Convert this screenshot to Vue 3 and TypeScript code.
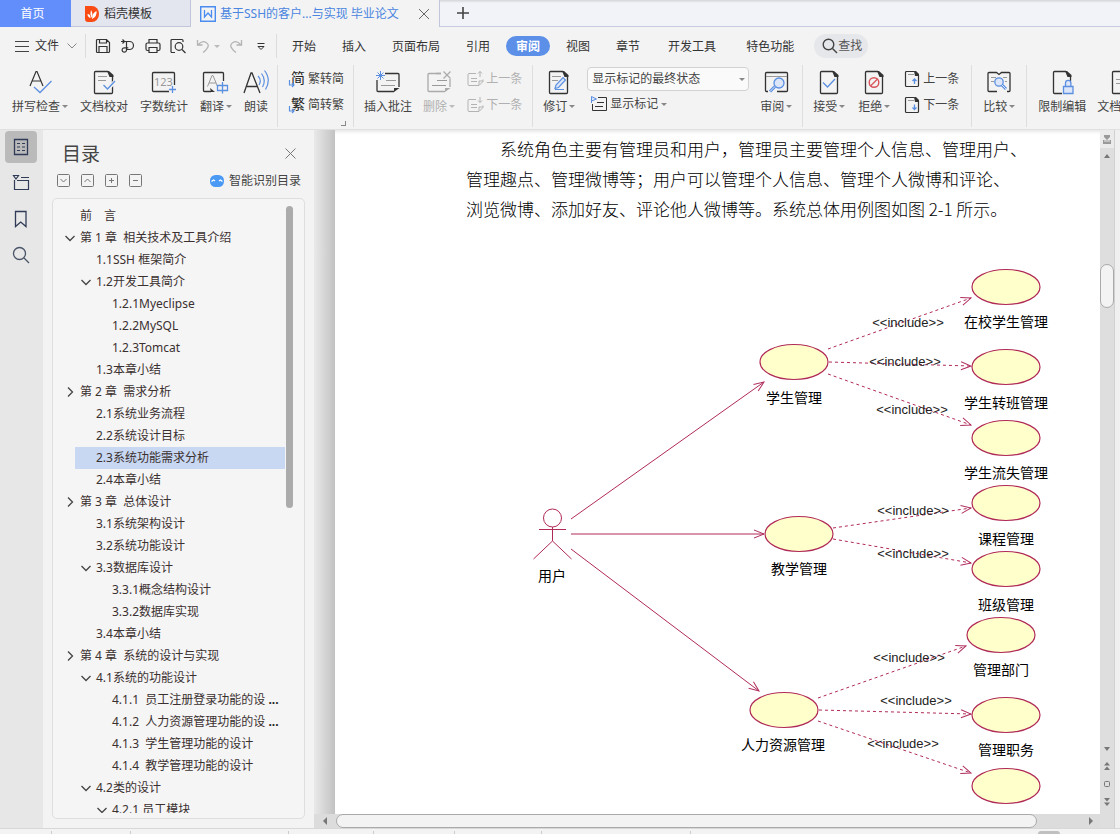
<script setup lang="ts">
import { ref } from 'vue'

interface TreeItem { text: string; level: number; arrow?: 'down' | 'right'; more?: boolean }
interface Oval { x: number; y: number; label: string; ly: number; lx: number }
interface Include { x1: number; y1: number; x2: number; y2: number; tx: number; ty: number }

const D = '#333'
const B = '#5b8fe0'
const G = '#999'
const page = (x: number, w: number) =>
  `<path d="M${x + w - 5} 3.500H${x + 1.5}a1 1 0 0 0-1 1v20a1 1 0 0 0 1 1h${w - 3}a1 1 0 0 0 1-1V8" stroke="${D}" stroke-width="1.300"/><path d="M${x + w - 6} 3h2l4.500 4v2h-4z" fill="${D}"/>`
const smallPage = `<path d="M11 1.500H3.500a1 1 0 0 0-1 1v13a1 1 0 0 0 1 1h11a1 1 0 0 0 1-1V5" stroke="${D}" stroke-width="1.200"/><path d="M11 1h2l3 3v2h-4z" fill="${D}"/><path d="M5 4.500h6" stroke="${G}"/>`
const note = (c: string) =>
  `<path d="M11 5.500H24a1 1 0 0 1 1 1V19M20 23.500H4a1 1 0 0 1-1-1V12" stroke="${c}" stroke-width="1.300"/><path d="M20 24v-4h5.500z" fill="${c}"/><path d="M12 12.500h10M7 17.500h14" stroke="${G}"/>`
const smallNote = '<path d="M10 3.500H3a1 1 0 0 0-1 1v10a1 1 0 0 0 1 1h10l4-4V9.500M13 15v-4h4M5 8.500h6M5 11.500h6" stroke="#b3b3b3"/>'

const icons: Record<string, string> = {
  spell: `<path d="M4 18 10 3.500h1L17 18M6.500 13h8" stroke="${D}" stroke-width="1.200"/><path d="M8 19l6 5.500L25.500 13" stroke="${B}" stroke-width="1.300"/>`,
  proof: page(4, 19) + `<path d="M13.500 17.500l4 4 7.500-8" stroke="#f3f3f3" stroke-width="4"/><path d="M8 8.500h9M8 12.500h8" stroke="${G}"/><path d="M13.500 17l4 4 7.500-8" stroke="${B}" stroke-width="1.300"/>`,
  count: `<path d="M19 23.500H3.500a1 1 0 0 1-1-1v-17a1 1 0 0 1 1-1h20a1 1 0 0 1 1 1V17" stroke="${D}" stroke-width="1.300"/><text x="4" y="18" font-size="11" fill="${G}" font-family="Noto Sans">123</text><path d="M19 21.500h7M22.500 18v7" stroke="${B}" stroke-width="1.300"/>`,
  translate: `<path d="M9 23.500H2.500a1 1 0 0 1-1-1v-17a1 1 0 0 1 1-1h18a1 1 0 0 1 1 1V13" stroke="${D}" stroke-width="1.300"/><path d="M8 20l5 4H9z" fill="${D}"/><path d="M5.500 18.500 10 7.500h1l4.500 11M7 15h7" stroke="${G}"/><path d="M15.500 17.500h10v5h-10zM20.500 14v11.500" stroke="${B}" stroke-width="1.300"/>`,
  read: `<path d="M2 25 9 5h1l8 20M5 18.500h10.500" stroke="${D}" stroke-width="1.300"/><path d="M16 8q4 4 1 9M19.500 5.500q5 6.500 1 13.500M22.500 2.500q7 9 1 19" stroke="${B}" stroke-width="1.200"/>`,
  comment: note(D) + `<path d="M2 7.500h9M6.500 3v9M3.500 4.500l6 6M9.500 4.500l-6 6" stroke="${B}"/>`,
  remove: note('#aaa') + '<path d="M16 2h12v9H16z" fill="#f3f3f3"/><path d="M3 12V6.500a1 1 0 0 1 1-1h12" stroke="#aaa" stroke-width="1.300"/><path d="M18.500 3.500l7 7M25.500 3.500l-7 7" stroke="#aaa" stroke-width="1.200"/>',
  revise: page(4, 19) + `<path d="M7 8.500h9M7 12.500h6" stroke="${G}"/><path d="M10 20.500l1-3.500 7-7.500 2.500 2.500-7 7.500z" fill="#dce6f8" stroke="${B}" stroke-width="1.200"/><path d="M10 21.500h9" stroke="${B}"/>`,
  review: `<path d="M6 23.500H4.500a1 1 0 0 1-1-1v-17a1 1 0 0 1 1-1h20a1 1 0 0 1 1 1v17a1 1 0 0 1-1 1H15" stroke="${D}" stroke-width="1.300"/><path d="M4 8.500h21" stroke="${G}"/><circle cx="17" cy="15" r="5" fill="#dce6f8" stroke="${B}" stroke-width="1.300"/><path d="M13 18.500l-5 5" stroke="${B}" stroke-width="3"/><path d="M13 18.500l-5 5" stroke="#dce6f8"/>`,
  accept: page(5, 18) + `<path d="M8 14.500l4.500 4.500 7.500-8" stroke="${B}" stroke-width="1.300"/>`,
  reject: page(5, 18) + '<circle cx="14" cy="14.500" r="4.800" stroke="#d9545a" stroke-width="1.400"/><path d="M10.500 18l7-7" stroke="#d9545a" stroke-width="1.300"/>',
  compare: `<path d="M12 23.500H4a1 1 0 0 1-1-1v-17a1 1 0 0 1 1-1h7.500l2.500 2 2.500-2H24a1 1 0 0 1 1 1v17a1 1 0 0 1-1 1h-2" stroke="${D}" stroke-width="1.300"/><path d="M6 9.500h5M6 13.500h3M18 9.500h4M20 13.500h2" stroke="${G}"/><circle cx="14" cy="14" r="4.200" fill="#dce6f8" stroke="${B}" stroke-width="1.300"/><path d="M17 17l4 4" stroke="${B}" stroke-width="3"/><path d="M17 17l4 4" stroke="#dce6f8"/>`,
  restrict: page(5, 18) + `<path d="M14 13h13v14H14z" fill="#f3f3f3"/><path d="M15.500 18.500h9.500v7h-9.500zM17.500 18v-3a2.700 2.700 0 0 1 5.400 0v3" fill="#dce6f8" stroke="${B}" stroke-width="1.300"/>`,
  access: page(5, 18) + `<path d="M9 11.500h8M9 15.500h8" stroke="${G}"/>`,
  toSimple: `<text x="3" y="13" font-size="14" fill="#222" font-family="Noto Sans CJK SC">简</text><path d="M1.500 10v5h4M4 13l2 2-2 2" stroke="${B}" stroke-width="1.200"/>`,
  toTrad: `<text x="3" y="13" font-size="14" fill="#222" font-family="Noto Sans CJK SC">繁</text><path d="M1.500 10v5h4M4 13l2 2-2 2" stroke="${B}" stroke-width="1.200"/>`,
  notePrev: smallNote + '<path d="M14 7V1.500M12 3.500l2-2 2 2" stroke="#b3b3b3"/>',
  noteNext: smallNote + '<path d="M14 1v5.500M12 4.500l2 2 2-2" stroke="#b3b3b3"/>',
  pagePrev: smallPage + `<path d="M11.500 14V9M9.500 11l2-2 2 2" stroke="${B}" stroke-width="1.300"/>`,
  pageNext: smallPage + `<path d="M11.500 8.500v5M9.500 11.500l2 2 2-2" stroke="${B}" stroke-width="1.300"/>`,
  marks: `<path d="M8 2.500h8.500v13h-14V9M7 7.500h7M5 11.500h8" stroke="${D}"/><path d="M1.500 8V1.500l5 2.500-5 2" stroke="${B}" fill="#dce6f8"/>`,
  save: `<path d="M2.500 3.500a1 1 0 0 1 1-1h9l3 3v9a1 1 0 0 1-1 1h-11a1 1 0 0 1-1-1zM5 15V9.500h8V15M5.500 3v3h7V3" stroke="${D}" stroke-width="1.200"/>`,
  pdf: `<path d="M2 4.500h8.500a4 4 0 0 1 0 8H7.500M3.500 2.500l2 2-2 2M7.500 5v8a2.200 2.200 0 1 1-2.200-2.200h4" stroke="${D}" stroke-width="1.200"/>`,
  print: `<path d="M5 6V2.500h8V6M5 13.500H3.500a1.500 1.500 0 0 1-1.500-1.500V7.500A1.500 1.500 0 0 1 3.500 6h11A1.500 1.500 0 0 1 16 7.500V12a1.500 1.500 0 0 1-1.500 1.500H13M5 10.500h8v5H5z" stroke="${D}" stroke-width="1.200"/>`,
  preview: `<path d="M6 15.500H3a1 1 0 0 1-1-1v-11a1 1 0 0 1 1-1h10a1 1 0 0 1 1 1V5" stroke="${D}" stroke-width="1.200"/><circle cx="10" cy="9.500" r="3.800" stroke="${D}" stroke-width="1.200"/><path d="M13 12.500l3.500 3.500" stroke="${D}" stroke-width="1.300"/>`,
  undo: '<path d="M3.500 3v5h5M4 8q4-5 8-2.500t1 6q-1 2-4 4" stroke="#b3b3b3" stroke-width="1.300"/>',
  redo: '<path d="M14.500 3v5h-5M14 8q-4-5-8-2.500t-1 6q1 2 4 4" stroke="#b3b3b3" stroke-width="1.300"/>',
  drop: `<path d="M5.500 6.500h7M6 9.500h6L9 12.500z" stroke="${D}"/>`,
}

const quick1 = ['save', 'pdf', 'print', 'preview']
const quickNames: Record<string, string> = { save: '保存', pdf: '输出为PDF', print: '打印', preview: '打印预览' }
const menusA = ['开始', '插入', '页面布局', '引用', '审阅', '视图', '章节']
const menusB = ['开发工具', '特色功能']
const menu = ref('审阅')
const markMode = ref('显示标记的最终状态')
const selected = ref(11)

const tree: TreeItem[] = [
  { text: '前　言', level: 0 },
  { text: '第 1 章  相关技术及工具介绍', level: 0, arrow: 'down' },
  { text: '1.1SSH 框架简介', level: 1 },
  { text: '1.2开发工具简介', level: 1, arrow: 'down' },
  { text: '1.2.1Myeclipse', level: 2 },
  { text: '1.2.2MySQL', level: 2 },
  { text: '1.2.3Tomcat', level: 2 },
  { text: '1.3本章小结', level: 1 },
  { text: '第 2 章  需求分析', level: 0, arrow: 'right' },
  { text: '2.1系统业务流程', level: 1 },
  { text: '2.2系统设计目标', level: 1 },
  { text: '2.3系统功能需求分析', level: 1 },
  { text: '2.4本章小结', level: 1 },
  { text: '第 3 章  总体设计', level: 0, arrow: 'right' },
  { text: '3.1系统架构设计', level: 1 },
  { text: '3.2系统功能设计', level: 1 },
  { text: '3.3数据库设计', level: 1, arrow: 'down' },
  { text: '3.3.1概念结构设计', level: 2 },
  { text: '3.3.2数据库实现', level: 2 },
  { text: '3.4本章小结', level: 1 },
  { text: '第 4 章  系统的设计与实现', level: 0, arrow: 'right' },
  { text: '4.1系统的功能设计', level: 1, arrow: 'down' },
  { text: '4.1.1  员工注册登录功能的设', level: 2, more: true },
  { text: '4.1.2  人力资源管理功能的设', level: 2, more: true },
  { text: '4.1.3  学生管理功能的设计', level: 2 },
  { text: '4.1.4  教学管理功能的设计', level: 2 },
  { text: '4.2类的设计', level: 1, arrow: 'down' },
  { text: '4.2.1 员工模块', level: 2, arrow: 'down' },
]

const lines = [
  '系统角色主要有管理员和用户，管理员主要管理个人信息、管理用户、',
  '管理趣点、管理微博等；用户可以管理个人信息、管理个人微博和评论、',
  '浏览微博、添加好友、评论他人微博等。系统总体用例图如图 2-1 所示。',
]

const ovals: Oval[] = [
  { x: 794, y: 362, label: '学生管理', lx: 794, ly: 403 },
  { x: 799, y: 534, label: '教学管理', lx: 799, ly: 574 },
  { x: 784, y: 710, label: '人力资源管理', lx: 783, ly: 750 },
  { x: 1006, y: 287, label: '在校学生管理', lx: 1006, ly: 327 },
  { x: 1006, y: 367, label: '学生转班管理', lx: 1006, ly: 408 },
  { x: 1006, y: 438, label: '学生流失管理', lx: 1006, ly: 478 },
  { x: 1006, y: 503, label: '课程管理', lx: 1006, ly: 544 },
  { x: 1006, y: 569, label: '班级管理', lx: 1006, ly: 610 },
  { x: 1001, y: 635, label: '管理部门', lx: 1001, ly: 675 },
  { x: 1006, y: 715, label: '管理职务', lx: 1006, ly: 755 },
  { x: 1006, y: 786, label: '', lx: 1006, ly: 826 },
]
const includes: Include[] = [
  { x1: 828, y1: 349, x2: 971, y2: 298, tx: 908, ty: 327 },
  { x1: 829, y1: 362, x2: 971, y2: 366, tx: 905, ty: 366 },
  { x1: 828, y1: 374, x2: 971, y2: 425, tx: 912, ty: 414 },
  { x1: 833, y1: 528, x2: 971, y2: 508, tx: 913, ty: 515 },
  { x1: 833, y1: 539, x2: 971, y2: 563, tx: 913, ty: 558 },
  { x1: 818, y1: 698, x2: 966, y2: 646, tx: 909, ty: 662 },
  { x1: 819, y1: 710, x2: 971, y2: 714, tx: 916, ty: 705 },
  { x1: 818, y1: 721, x2: 971, y2: 773, tx: 903, ty: 748 },
]
const links = [
  [571, 519, 764, 382],
  [571, 534, 764, 534],
  [571, 549, 759, 691],
]
const ticks = [52, 79, 158, 85, 81, 87, 149]
</script>

<template>
  <div class="app">
    <header class="tabs">
      <button class="tab home">首页</button>
      <button class="tab store">
        <svg width="14" height="16" viewBox="0 0 14 16"><path d="M0 0h7a7 8 0 0 1 0 16H3a3 3 0 0 1-3-3z" fill="#fb4b15" /><path d="M2.500 8q3 0 3 4-3-1-3-4zM6 4q2.500 4 .5 8Q4.500 8 6 4zM11.500 5q1 5-4.500 8 0-6 4.500-8z" fill="#fff" /></svg>
        稻壳模板
      </button>
      <div class="tab doc-tab">
        <svg width="16" height="16" viewBox="0 0 16 16" fill="none" stroke="#4a8cf0"><path d="M.7.7h14.600v14.600H.7z" stroke-width="1.400" /><path d="M4.500 4v7l3.500-4 3.500 4V4" stroke-width="1.300" /></svg>
        <span>基于SSH的客户...与实现 毕业论文</span>
        <button class="close" aria-label="关闭"><svg width="12" height="12" viewBox="0 0 12 12" stroke="#666"><path d="M1 1l10 10M11 1 1 11" /></svg></button>
      </div>
      <div class="tab-rest">
        <button aria-label="新建"><svg width="14" height="14" viewBox="0 0 14 14" stroke="#444" stroke-width="1.600"><path d="M1 7h12M7 1v12" /></svg></button>
      </div>
    </header>

    <nav class="menu">
      <button class="file">
        <svg width="15" height="12" viewBox="0 0 15 12" stroke="#444"><path d="M0 1.500h14M0 6.500h14M0 11.500h14" /></svg>
        文件
        <svg class="chev" width="10" height="6" viewBox="0 0 10 6" fill="none" stroke="#888"><path d="M.5.5 5 5 9.500.5" /></svg>
      </button>
      <i class="bar"></i>
      <div class="quick">
        <button v-for="q in quick1" :key="q" :aria-label="quickNames[q]"><svg width="18" height="18" fill="none" v-html="icons[q]"></svg></button>
        <button aria-label="撤销" class="undo"><svg width="18" height="18" fill="none" v-html="icons.undo"></svg><b class="caret pale"></b></button>
        <button aria-label="恢复"><svg width="18" height="18" fill="none" v-html="icons.redo"></svg></button>
        <button aria-label="更多"><svg width="18" height="18" fill="none" v-html="icons.drop"></svg></button>
      </div>
      <i class="bar"></i>
      <div class="menus">
        <button v-for="m in menusA" :key="m" :class="{ on: m === menu }" @click="menu = m">{{ m }}</button>
        <button v-for="m in menusB" :key="m" class="wide" :class="{ on: m === menu }" @click="menu = m">{{ m }}</button>
        <button class="find"><svg width="16" height="16" viewBox="0 0 16 16" fill="none" stroke="#444" stroke-width="1.400"><circle cx="6.500" cy="6.500" r="5.300" /><path d="M10.500 10.500 15 15" /></svg>查找</button>
      </div>
    </nav>

    <section class="ribbon">
      <div class="group g12">
        <button class="big"><svg v-html="icons.spell"></svg><span>拼写检查<b class="caret"></b></span></button>
        <button class="big"><svg v-html="icons.proof"></svg><span>文档校对</span></button>
        <button class="big"><svg v-html="icons.count"></svg><span>字数统计</span></button>
        <button class="big"><svg v-html="icons.translate"></svg><span>翻译<b class="caret"></b></span></button>
        <button class="big"><svg v-html="icons.read"></svg><span>朗读</span></button>
      </div>
      <div class="group corner">
        <div class="stack">
          <button class="small"><svg v-html="icons.toSimple"></svg>繁转简</button>
          <button class="small"><svg v-html="icons.toTrad"></svg>简转繁</button>
        </div>
      </div>
      <div class="group">
        <button class="big"><svg v-html="icons.comment"></svg><span>插入批注</span></button>
        <button class="big off"><svg v-html="icons.remove"></svg><span>删除<b class="caret pale"></b></span></button>
        <div class="stack">
          <button class="small off"><svg v-html="icons.notePrev"></svg>上一条</button>
          <button class="small off"><svg v-html="icons.noteNext"></svg>下一条</button>
        </div>
      </div>
      <div class="group">
        <button class="big"><svg v-html="icons.revise"></svg><span>修订<b class="caret"></b></span></button>
        <div class="stack fields">
          <label class="combo">
            <select v-model="markMode" aria-label="标记状态">
              <option>显示标记的最终状态</option>
              <option>最终状态</option>
              <option>显示标记的原始状态</option>
              <option>原始状态</option>
            </select>
            <b class="caret"></b>
          </label>
          <button class="small marks"><svg v-html="icons.marks"></svg>显示标记<b class="caret"></b></button>
        </div>
        <button class="big"><svg v-html="icons.review"></svg><span>审阅<b class="caret"></b></span></button>
      </div>
      <div class="group g13">
        <button class="big"><svg v-html="icons.accept"></svg><span>接受<b class="caret"></b></span></button>
        <button class="big"><svg v-html="icons.reject"></svg><span>拒绝<b class="caret"></b></span></button>
        <div class="stack">
          <button class="small"><svg v-html="icons.pagePrev"></svg>上一条</button>
          <button class="small"><svg v-html="icons.pageNext"></svg>下一条</button>
        </div>
      </div>
      <div class="group p11">
        <button class="big"><svg v-html="icons.compare"></svg><span>比较<b class="caret"></b></span></button>
      </div>
      <div class="group p11">
        <button class="big"><svg v-html="icons.restrict"></svg><span>限制编辑</span></button>
        <button class="big"><svg v-html="icons.access"></svg><span>文档权限</span></button>
      </div>
    </section>

    <main class="body">
      <aside class="rail">
        <button class="on" aria-label="目录"><svg width="20" height="20" viewBox="0 0 20 20" fill="none" stroke="#2f3b57"><path d="M3.500 2.500h13v15h-13z" stroke-width="1.300" /><path d="M6 6.500h3M11 6.500h3M6 10h3M11 10h3M6 13.500h3M11 13.500h3" /></svg></button>
        <button aria-label="章节"><svg width="20" height="20" viewBox="0 0 20 20" fill="none" stroke="#2f3b57" stroke-width="1.200"><path d="M2.500 2.500h5L5 6zM10 4.500h8M3.500 7v9.500h14v-9H6" /></svg></button>
        <button aria-label="书签"><svg width="20" height="20" viewBox="0 0 20 20" fill="none" stroke="#2f3b57" stroke-width="1.300"><path d="M4.500 2.500h10.500v15L9.700 13l-5.200 4.500z" /></svg></button>
        <button aria-label="查找"><svg width="20" height="20" viewBox="0 0 20 20" fill="none" stroke="#4a5468" stroke-width="1.300"><circle cx="8.500" cy="8.500" r="6" /><path d="M13 13l5 5" /></svg></button>
      </aside>

      <aside class="panel">
        <div class="panel-head">
          <h2>目录</h2>
          <button aria-label="关闭目录"><svg width="11" height="11" viewBox="0 0 11 11" stroke="#777"><path d="M.5.5l10 10M10.500.5l-10 10" /></svg></button>
        </div>
        <div class="tools">
          <button aria-label="展开"><svg width="13" height="13" viewBox="0 0 13 13" fill="none" stroke="#777"><rect x=".5" y=".5" width="12" height="12" rx="1" /><path d="M3.500 5l3 3 3-3" /></svg></button>
          <button aria-label="收起"><svg width="13" height="13" viewBox="0 0 13 13" fill="none" stroke="#777"><rect x=".5" y=".5" width="12" height="12" rx="1" /><path d="M3.500 8l3-3 3 3" /></svg></button>
          <button aria-label="增加级别"><svg width="13" height="13" viewBox="0 0 13 13" fill="none" stroke="#777"><rect x=".5" y=".5" width="12" height="12" rx="1" /><path d="M4 6.500h5M6.500 4v5" /></svg></button>
          <button aria-label="减少级别"><svg width="13" height="13" viewBox="0 0 13 13" fill="none" stroke="#777"><rect x=".5" y=".5" width="12" height="12" rx="1" /><path d="M4 6.500h5" /></svg></button>
          <button class="smart"><svg width="14" height="12" viewBox="0 0 14 12"><rect width="14" height="12" rx="5.500" fill="#4a9af5" /><path d="M1.500 6.500l2-1.500 1.500 1M9 6l1.500-1 2 1.500" fill="none" stroke="#fff" stroke-width="1.200" /></svg>智能识别目录</button>
        </div>
        <div class="outline">
          <ul>
            <li v-for="(t, i) in tree" :key="i">
              <button :class="['row', 'l' + t.level, { sel: i === selected }]" @click="selected = i">
                <svg width="10" height="10" viewBox="0 0 10 10" fill="none" stroke="#444" stroke-width="1.300"><path v-if="t.arrow === 'down'" d="M.5 3 5 7.500 9.500 3" /><path v-if="t.arrow === 'right'" d="M3 .5 7.500 5 3 9.500" /></svg><span>{{ t.text }}<strong v-if="t.more"> ...</strong></span>
              </button>
            </li>
          </ul>
          <div class="track"><div class="thumb"></div></div>
        </div>
      </aside>

      <section class="work">
        <div class="view">
          <article class="paper">
            <p><span v-for="(l, i) in lines" :key="i" :class="{ first: i === 0 }">{{ l }}</span></p>
            <svg class="diagram" width="765" height="590" viewBox="335 224 765 590">
              <defs>
                <marker id="tip" viewBox="0 0 12 10" refX="11" refY="5" markerWidth="12" markerHeight="10" markerUnits="userSpaceOnUse" orient="auto"><path d="M1 1l10 4-10 4" fill="none" stroke="#b03060" /></marker>
              </defs>
              <g fill="none" stroke="#b02a58">
                <circle cx="552.500" cy="518" r="9" />
                <path d="M539 529.500h27M552.500 527v14M552.500 541l-19 18M552.500 541l19 18" />
                <path v-for="(k, i) in links" :key="i" :d="`M${k[0]} ${k[1]}L${k[2]} ${k[3]}`" marker-end="url(#tip)" />
                <path v-for="(k, i) in includes" :key="'i' + i" :d="`M${k.x1} ${k.y1}L${k.x2} ${k.y2}`" stroke-dasharray="3 3" marker-end="url(#tip)" />
              </g>
              <ellipse v-for="(o, i) in ovals" :key="i" :cx="o.x" :cy="o.y" rx="34" ry="17.500" fill="#ffffcc" stroke="#b02a58" stroke-width="1.200" />
              <text x="552" y="581" class="name">用户</text>
              <text v-for="(o, i) in ovals.filter(v => v.label)" :key="'n' + i" :x="o.lx" :y="o.ly" class="name">{{ o.label }}</text>
              <text v-for="(k, i) in includes" :key="'t' + i" :x="k.tx" :y="k.ty" class="inc">&lt;&lt;include&gt;&gt;</text>
            </svg>
          </article>
          <div class="hscroll">
            <svg width="6" height="8" viewBox="0 0 6 8"><path d="M5 0v8L1 4z" fill="#777" /></svg>
            <div class="hthumb"></div>
            <svg width="6" height="8" viewBox="0 0 6 8"><path d="M1 0v8l4-4z" fill="#777" /></svg>
          </div>
        </div>
        <div class="vscroll">
          <div class="ruler"><svg width="8" height="9" viewBox="0 0 8 9" fill="#999"><path d="M1 0h6v2L4 5 1 2zM0 5h1.500v2h1V5h1v2h1V5h1v2h1V5H8v4H0z" /></svg></div>
          <svg class="up" width="6" height="4" viewBox="0 0 6 4"><path d="M0 4h6L3 0z" fill="#777" /></svg>
          <div class="vthumb"></div>
          <div class="pager">
            <svg width="6" height="4" viewBox="0 0 6 4"><path d="M0 0h6L3 4z" fill="#777" /></svg>
            <svg width="6" height="8" viewBox="0 0 6 8"><path d="M0 3.500h6L3 0zM0 8h6L3 4.500z" fill="#777" /></svg>
            <svg width="6" height="6" viewBox="0 0 6 6"><rect x=".5" y=".5" width="5" height="5" rx="1" fill="none" stroke="#777" /></svg>
            <svg width="6" height="8" viewBox="0 0 6 8"><path d="M0 0h6L3 3.500zM0 4.500h6L3 8z" fill="#777" /></svg>
          </div>
        </div>
        <div class="edge"></div>
      </section>
    </main>

    <footer class="status"><i v-for="(t, i) in ticks" :key="i" :style="{ width: t + 'px' }"></i><span class="knob"></span></footer>
  </div>
</template>

<style>
body { margin: 0; overflow: hidden; }
</style>

<style scoped>
.app {
  height: 100vh;
  display: flex;
  flex-direction: column;
  background: #f3f3f3;
  color: #444;
  font: 12px/18px "Noto Sans", "Noto Sans CJK SC", sans-serif;
  overflow: hidden;
}
button {
  font: inherit;
  color: inherit;
  background: none;
  border: 0;
  padding: 0;
  margin: 0;
  white-space: nowrap;
  flex: none;
}
svg { display: block; flex: none; }
.caret {
  display: inline-block;
  border: 3px solid transparent;
  border-top-color: #888;
  border-bottom: 0;
  margin-left: 2px;
  vertical-align: 3px;
}
.caret.pale { border-top-color: #bbb; }

.tabs { display: flex; height: 27px; flex: none; }
.tab { display: flex; align-items: center; box-sizing: border-box; padding-top: 1px; }
.home { width: 71px; justify-content: center; background: #618efb; color: #fff; padding-right: 6px; }
.store {
  width: 120px;
  padding-left: 14px;
  gap: 5px;
  background: #e4e6ef;
  color: #333;
  border-right: 1px solid #c2c6da;
  border-bottom: 1px solid #c2c6da;
}
.doc-tab { padding-left: 9px; gap: 4px; width: 248px; color: #4a85e0; }
.doc-tab span { flex: 1; white-space: nowrap; }
.close { padding-right: 9px; }
.tab-rest {
  flex: 1;
  display: flex;
  align-items: center;
  padding-left: 16px;
  background: linear-gradient(#d4d5d9, #f2f3f8 3px);
  border-left: 1px solid #c2c6da;
  border-bottom: 1px solid #c9cce0;
}

.menu { display: flex; align-items: center; height: 38px; flex: none; padding-left: 15px; color: #333; }
.file { display: flex; align-items: center; gap: 5px; width: 70px; }
.chev { margin-left: 3px; }
.bar { width: 1px; height: 24px; background: #dcdcdc; flex: none; }
.quick { display: flex; gap: 7px; width: 182px; padding-left: 8px; }
.undo { display: flex; align-items: center; }
.menus { display: flex; align-items: center; gap: 6px; padding-left: 5px; }
.menus button { padding: 1px 10px 0 10px; height: 20px; border-radius: 10px; }
.menus button.wide { padding: 1px 12px 0 12px; }
.menus .on { background: #5b8fe8; color: #fff; font-weight: 700; }
.menus button.find { display: flex; align-items: center; height: 24px; border-radius: 12px; padding: 0 6px 0 8px; margin-left: 2px; background: #e6e7ea; color: #555; }

.ribbon { display: flex; height: 64px; flex: none; padding-left: 2px; overflow: hidden; }
.group { display: flex; gap: 11px; padding: 3px 10px 0 10px; height: 59px; border-right: 1px solid #dedede; flex: none; }
.group:last-child { border: 0; }
.g12 { gap: 12px; padding-right: 9px; }
.g13 { gap: 13px; padding-right: 12px; }
.p11 { padding-left: 11px; padding-right: 11px; }
.corner { position: relative; padding-right: 9px; }
.corner::after {
  content: "";
  position: absolute;
  right: 7px;
  bottom: 1px;
  width: 4px;
  height: 4px;
  border: solid #888;
  border-width: 0 1px 1px 0;
}
.big { display: flex; flex-direction: column; align-items: center; height: 48px; gap: 2px; }
.big > svg { width: 28px; height: 28px; fill: none; margin: 0 -6px; }
.big span { height: 18px; }
.stack { display: flex; flex-direction: column; gap: 8px; padding-top: 2px; }
.small { display: flex; align-items: center; gap: 2px; height: 18px; }
.small > svg { width: 18px; height: 18px; fill: none; overflow: visible; }
.off { color: #b0b0b0; }
.fields { gap: 4px; padding-top: 0; margin-top: -1px; }
.combo {
  display: flex;
  align-items: center;
  width: 160px;
  height: 22px;
  margin-left: 1px;
  background: #fafafa;
  border: 1px solid #d2d2d2;
  border-radius: 4px;
}
.combo select {
  appearance: none;
  flex: 1;
  border: 0;
  padding: 0 0 0 4px;
  background: none;
  font: inherit;
  color: #444;
  outline: 0;
}
.combo .caret { margin-right: 3px; }
.marks { padding-left: 4px; }
.marks .caret { margin-left: 1px; }

.body { flex: 1; display: flex; min-height: 0; border-top: 1px solid #e0e0e0; }
.rail { width: 43px; flex: none; background: #e7e7e7; display: flex; flex-direction: column; gap: 4px; padding-top: 1px; box-sizing: border-box; }
.rail button { width: 32px; height: 32px; margin-left: 5px; border-radius: 4px; display: grid; place-items: center; }
.rail .on { background: #bababa; }
.panel { width: 271px; flex: none; display: flex; flex-direction: column; box-sizing: border-box; padding: 9px 9px 9px 9px; }
.panel-head { display: flex; justify-content: space-between; align-items: center; padding: 0 9px 1px 10px; }
h2 { margin: 0; font: 19px/28px "Noto Sans CJK SC", sans-serif; color: #444; }
.tools { display: flex; gap: 11px; align-items: center; height: 24px; padding: 0 4px 0 5px; }
.smart { display: flex; align-items: center; gap: 5px; margin-left: auto; padding-top: 1px; }
.outline { flex: 1; min-height: 0; margin-top: 6px; display: flex; border: 1px solid #dedede; border-radius: 5px; background: #f5f5f5; padding: 6px 11px 5px 10px; }
ul { list-style: none; margin: 0; padding: 0; flex: 1; overflow: hidden; min-width: 0; }
.row { display: flex; align-items: center; gap: 5px; width: 100%; height: 22px; color: #3b3030; white-space: pre; }
.row.l0 { padding-left: 2px; }
.row.l1 { padding-left: 18px; }
.row.l2 { padding-left: 34px; }
.row strong { color: #222; }
.sel { background: linear-gradient(90deg, transparent 12px, #c8d8f2 12px); }
.track { width: 8px; flex: none; }
.thumb { width: 7px; height: 302px; margin-top: 1px; margin-left: 1px; border-radius: 4px; background: #ababab; }

.work { flex: 1; display: flex; min-width: 0; }
.view { flex: 1; display: flex; flex-direction: column; min-width: 0; background: linear-gradient(90deg, #e9e9e9, #c2c2c2 21px); }
.paper { flex: 1; min-height: 0; margin-left: 21px; background: #fff; overflow: hidden; padding-top: 4px; box-shadow: inset 0 4px 4px -3px #ddd; }
p { margin: 0; padding-left: 131px; color: #000; font: 300 17px/30px "Noto Sans CJK SC", sans-serif; }
p span { display: block; white-space: nowrap; }
.first { padding-left: 34px; }
.name { font: 14px "Noto Sans CJK SC", sans-serif; fill: #000; text-anchor: middle; }
.inc { font: 13px "Liberation Sans", Arial, sans-serif; fill: #222; text-anchor: middle; }
.hscroll { display: flex; align-items: center; height: 14px; flex: none; background: #dcdcdc; padding: 0 6px 0 8px; gap: 8px; }
.hthumb { flex: 1; height: 12px; border: 1px solid #aaa; border-radius: 7px; background: #f3f3f3; margin-right: 43px; }
.vscroll { width: 14px; flex: none; display: flex; flex-direction: column; align-items: center; background: #dedede; }
.ruler { width: 14px; height: 18px; background: #ebebeb; display: grid; place-items: center; }
.up { margin-top: 6px; }
.vthumb { width: 12px; height: 42px; margin-top: 106px; border: 1px solid #aaa; border-radius: 7px; background: #f3f3f3; }
.pager { margin-top: auto; display: flex; flex-direction: column; align-items: center; gap: 11px; padding-bottom: 22px; }
.edge { width: 5px; flex: none; background: #f0f0f0; border-left: 1px solid #d0d0d0; }
.status { height: 5px; flex: none; display: flex; align-items: flex-end; border-top: 1px solid #d8d8d8; }
.status i { height: 3px; border-right: 1px solid #ccc; box-sizing: border-box; }
.knob { width: 22px; height: 3px; margin-left: auto; margin-right: 60px; border-radius: 3px 3px 0 0; background: #c0c0c0; }
</style>
